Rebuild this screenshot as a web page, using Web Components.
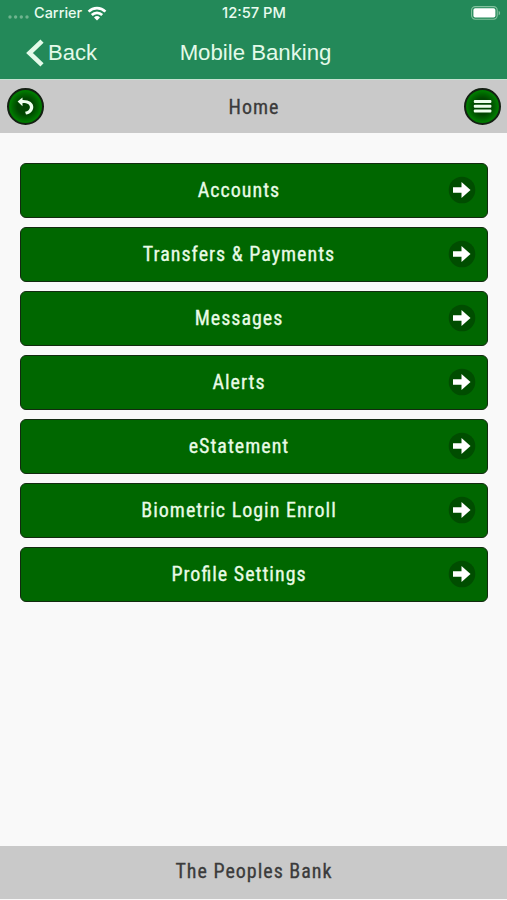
<!DOCTYPE html>
<html lang="en">
<head>
<meta charset="utf-8">
<title>Mobile Banking</title>
<style>
  body {
    margin: 0;
    background: #f9f9f9;
  }
</style>
</head>
<body>
<bank-app></bank-app>

<script>
class StatusBar extends HTMLElement {
  constructor() {
    super();
    this._shadowRoot = this.attachShadow({ mode: 'open' });
  }

  connectedCallback() {
    this._shadowRoot.innerHTML = `
        <style>
        :host {
          display: grid;
          grid-template-columns: 1fr auto 1fr;
          align-items: center;
          height: 26px;
          padding: 0 7px 0 8px;
          font: 500 14.5px/26px Inter, sans-serif;
          color: #e9fbef;
        }

        .left {
          display: flex;
          align-items: center;
        }

        .dots {
          margin: 7px 5px 0 0;
        }

        .wifi {
          margin-left: 5px;
        }

        .time {
          font-size: 14.7px;
        }

        .battery {
          justify-self: end;
          margin-right: -1px;
        }

        svg {
          display: block;
        }
        </style>

        <div class="left">
          <svg class="dots" width="21" height="6" viewBox="0 0 21 6" fill="#6fb48f">
            <circle cx="2" cy="3" r="1.7" /><circle cx="7.6" cy="3" r="1.7" />
            <circle cx="13.3" cy="3" r="1.7" /><circle cx="19" cy="3" r="1.7" />
          </svg>
          <span class="carrier">Carrier</span>
          <svg class="wifi" width="20" height="15" viewBox="0 0 20 15" fill="none" stroke="#fff" stroke-width="2.7">
            <path d="M1.6 5.6a12 12 0 0 1 16.8 0M4.8 9a7.4 7.4 0 0 1 10.4 0" />
            <path d="M10 14.5 7 11.4a4.3 4.3 0 0 1 6 0z" fill="#fff" stroke="none" />
          </svg>
        </div>
        <span class="time">12:57 PM</span>
        <svg class="battery" width="30" height="14" viewBox="0 0 30 14">
          <rect x=".6" y=".6" width="25.6" height="12.6" rx="3.6" fill="none" stroke="#83c29f" stroke-width="1.1" />
          <rect x="2.4" y="2.3" width="22" height="9.2" rx="1.8" fill="#fff" />
          <path d="M27.7 4.7v4.6c1.9-.8 1.9-3.8 0-4.6z" fill="#83c29f" />
        </svg>
        `;
  }
}

class NavBar extends HTMLElement {
  constructor() {
    super();
    this._shadowRoot = this.attachShadow({ mode: 'open' });
  }

  connectedCallback() {
    this._shadowRoot.innerHTML = `
        <style>
        :host {
          display: grid;
          grid-template-columns: 1fr auto 1fr;
          align-items: center;
          height: 53px;
          box-sizing: border-box;
          padding: 0 22px 0 26px;
          font: 22.2px/53px "Liberation Sans", sans-serif;
          color: #e4fae9;
        }

        .back {
          display: flex;
          align-items: center;
        }

        .label {
          margin-left: 4px;
          font-size: 22px;
        }
        </style>

        <div class="back">
          <svg width="18" height="28" viewBox="0 0 18 28" fill="none" stroke="#e4fae9" stroke-width="4.6">
            <path d="M16 2.2 3.5 14 16 25.8" />
          </svg>
          <span class="label">Back</span>
        </div>
        <span class="title"><slot></slot></span>
        `;
  }
}

class RoundButton extends HTMLElement {
  constructor() {
    super();
    this._shadowRoot = this.attachShadow({ mode: 'open' });
  }

  connectedCallback() {
    const icons = {
      back: `
          <path d="M10.6 13.4l4.9-4v2.5c6.8-.2 11 3 10.8 7.2-.1 4-3 6.9-7.3 7.5l-.9-2.8c2.8-.6 4.8-2.3 4.8-4.6 0-2.7-2.7-4.3-7.4-4.1v3.1z" />`,
      menu: `
          <rect x="9.8" y="12" width="17.6" height="3" rx="1" />
          <rect x="9.8" y="16.8" width="17.6" height="3" rx="1" />
          <rect x="9.8" y="21.4" width="17.6" height="3" rx="1" />`
    };
    this._shadowRoot.innerHTML = `
        <style>
        :host {
          display: block;
          width: 37px;
          height: 37px;
          box-sizing: border-box;
          border: 2px solid #142013;
          border-radius: 50%;
          background: radial-gradient(circle, #004600 0 35%, #006800 56%, #007a00 66%);
        }

        svg {
          display: block;
          margin: -2px;
        }
        </style>

        <svg width="37" height="37" viewBox="0 0 37 37" fill="#edffed">${icons[this.getAttribute('icon')]}</svg>
        `;
  }
}

class PageBar extends HTMLElement {
  constructor() {
    super();
    this._shadowRoot = this.attachShadow({ mode: 'open' });
  }

  connectedCallback() {
    this._shadowRoot.innerHTML = `
        <style>
        :host {
          display: grid;
          grid-template-columns: 1fr auto 1fr;
          align-items: center;
          box-sizing: border-box;
          height: 53px;
          padding: 0 6px 0 7px;
          background: #c9c9c9;
          color: #3b3b3b;
        }

        .end {
          justify-self: end;
        }
        </style>

        <slot name="start"><span></span></slot>
        <span class="title"><slot></slot></span>
        <div class="end"><slot name="end"></slot></div>
        `;
  }
}

class MenuItem extends HTMLElement {
  constructor() {
    super();
    this._shadowRoot = this.attachShadow({ mode: 'open' });
  }

  connectedCallback() {
    this._shadowRoot.innerHTML = `
        <style>
        :host {
          display: flex;
          align-items: center;
          box-sizing: border-box;
          height: 55px;
          padding: 0 10px 1px 10px;
          border: 1.5px solid #132b10;
          border-radius: 6px;
          background: #006700;
          color: #e9fbe6;
        }

        .label {
          flex: 1;
          text-align: center;
        }
        </style>

        <span class="label"><slot></slot></span>
        <svg width="30" height="28" viewBox="0 0 30 28">
          <circle cx="15" cy="14" r="13.3" fill="#004d00" />
          <path d="M6 11.2h8.5V6L23.5 14l-9 8v-5.2H6z" fill="#fff" />
        </svg>
        `;
  }
}

class BankApp extends HTMLElement {
  constructor() {
    super();
    this._shadowRoot = this.attachShadow({ mode: 'open' });
  }

  connectedCallback() {
    const items = [
      'Accounts',
      'Transfers &amp; Payments',
      'Messages',
      'Alerts',
      'eStatement',
      'Biometric Login Enroll',
      'Pro<span class="liga">fi</span>le Settings'
    ];

    this._shadowRoot.innerHTML = `
        <style>
        :host {
          display: flex;
          flex-direction: column;
          height: 900px;
          overflow: hidden;
          font: 20px/24px "Roboto Condensed", Roboto, sans-serif;
          font-stretch: 75%;
          letter-spacing: 1px;
          -webkit-text-stroke: 0.3px;
        }

        header {
          background: #238959;
          border-bottom: 1px solid #c5e2d1;
          letter-spacing: 0;
          font-stretch: normal;
          -webkit-text-stroke: 0;
        }

        main {
          flex: 1;
          display: flex;
          flex-direction: column;
          gap: 9px;
          padding: 30px 19px 0 20px;
        }

        /* letter-spacing turns ligatures off */
        .liga {
          letter-spacing: 0;
          margin-right: 1px;
        }

        footer {
          padding-bottom: 1px;
        }

        footer page-bar {
          padding-bottom: 3px;
        }
        </style>

        <header>
          <status-bar></status-bar>
          <nav-bar>Mobile Banking</nav-bar>
        </header>
        <page-bar>
          <round-button slot="start" icon="back"></round-button>
          Home
          <round-button slot="end" icon="menu"></round-button>
        </page-bar>
        <main>
          ${items.map((item) => `<menu-item>${item}</menu-item>`).join('')}
        </main>
        <footer>
          <page-bar>The Peoples Bank</page-bar>
        </footer>
        `;
  }
}

customElements.define('status-bar', StatusBar);
customElements.define('nav-bar', NavBar);
customElements.define('round-button', RoundButton);
customElements.define('page-bar', PageBar);
customElements.define('menu-item', MenuItem);
customElements.define('bank-app', BankApp);
</script>
</body>
</html>
